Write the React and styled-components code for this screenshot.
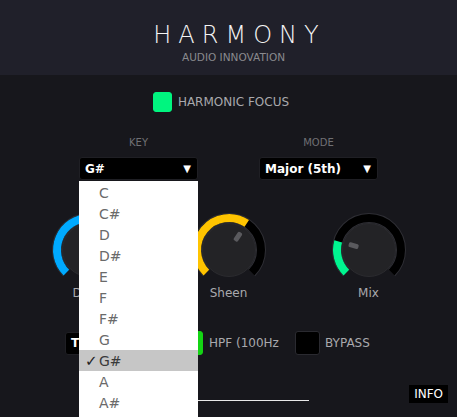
import React from 'react'
import styled, { createGlobalStyle } from 'styled-components'

const Global = createGlobalStyle`
  html, body {
    margin: 0;
    padding: 0;
    background: #17171c;
    height: 100%;
    overflow: hidden;
  }
  * { box-sizing: border-box; }
`

const Page = styled.div`
  width: 457px;
  height: 417px;
  position: relative;
  overflow: hidden;
  background: #17171c;
  font-family: "DejaVu Sans", Verdana, sans-serif;
  display: flex;
  flex-direction: column;
`

const Header = styled.header`
  height: 75px;
  background: #20202a;
  display: flex;
  flex-direction: column;
  align-items: center;
  padding: 22px 0 0 10px;
`

const Title = styled.h1`
  margin: 0;
  padding-left: 12px;
  color: #f4f4f4;
  font-size: 24px;
  font-weight: 200;
  letter-spacing: 7px;
  line-height: 26px;
`

const Subtitle = styled.div`
  margin-top: 3px;
  color: #8a8a8e;
  font-size: 10.5px;
  line-height: 13px;
`

const FocusRow = styled.label`
  display: flex;
  align-items: center;
  justify-content: center;
  gap: 6px;
  margin-top: 17px;
  padding-right: 15px;
  color: #a9a9ad;
  font-size: 12px;
`

const Check = styled.span`
  width: ${p => p.$w || 19}px;
  height: ${p => p.$h || 20}px;
  border-radius: 3px;
  background: ${p => p.$color || '#000'};
  border: 1px solid ${p => p.$border || p.$color || '#2a2a30'};
  flex: none;
`

const SelectRow = styled.div`
  display: grid;
  grid-template-columns: 119px 119px;
  justify-content: center;
  column-gap: 61px;
  margin-top: 26px;
`

const Field = styled.div`
  display: flex;
  flex-direction: column;
  align-items: center;
  gap: 9px;
  position: relative;
`

const FieldLabel = styled.div`
  color: #707074;
  font-size: 10px;
  line-height: 10px;
`

const Select = styled.div`
  width: ${p => p.$width || 119}px;
  height: 23px;
  background: #000;
  border: 1px solid #1f1f24;
  border-radius: 3px;
  display: flex;
  align-items: center;
  justify-content: space-between;
  padding: 0 6px 0 5px;
  color: #fff;
  font-weight: bold;
  font-size: 12px;
  flex: none;
  overflow: hidden;
`

const Arrow = styled.span`
  font-size: 10px;
  font-weight: normal;
`

const Menu = styled.ul`
  position: absolute;
  top: 43px;
  left: 0;
  width: 119px;
  margin: 0;
  padding: 1px 0 0;
  list-style: none;
  background: #fff;
  z-index: 10;
`

const MenuItem = styled.li`
  height: 21px;
  display: flex;
  align-items: center;
  padding-left: 20px;
  position: relative;
  font-size: 14px;
  color: ${p => (p.$active ? '#3a3a3a' : '#6a6a6a')};
  background: ${p => (p.$active ? '#c6c6c6' : 'transparent')};
`

const Tick = styled.span`
  position: absolute;
  left: 6px;
  color: #222;
  font-size: 15px;
  font-weight: bold;
`

const KnobRow = styled.div`
  display: grid;
  grid-template-columns: repeat(3, 140px);
  justify-content: center;
  margin-top: 32px;
`

const KnobBox = styled.div`
  display: flex;
  flex-direction: column;
  align-items: center;
`

const KnobLabel = styled.div`
  margin-top: -2px;
  color: #a9a9ad;
  font-size: 12px;
  line-height: 14px;
`

const ControlRow = styled.div`
  display: flex;
  align-items: center;
  margin-top: 31px;
  padding-left: 65px;
`

const OptLabel = styled.span`
  color: #a9a9ad;
  font-size: 12px;
  width: ${p => (p.$clip ? '70px' : 'auto')};
  white-space: nowrap;
  overflow: hidden;
  margin: 0 ${p => p.$mr || 0}px 0 ${p => p.$ml || 6}px;
`

const Rule = styled.div`
  width: 161px;
  height: 1px;
  background: #e8e8e8;
  margin: 45px auto 0;
`

const InfoButton = styled.button`
  position: absolute;
  right: 9px;
  bottom: 14px;
  background: #000;
  color: #fff;
  border: none;
  font-family: "DejaVu Sans", Verdana, sans-serif;
  font-size: 12px;
  padding: 2px 5px;
  line-height: 14px;
`

const polar = (cx, cy, r, deg) => {
  const a = (deg * Math.PI) / 180
  return [cx + r * Math.sin(a), cy - r * Math.cos(a)]
}

const arc = (cx, cy, r, from, to) => {
  const [x1, y1] = polar(cx, cy, r, from)
  const [x2, y2] = polar(cx, cy, r, to)
  const large = to - from > 180 ? 1 : 0
  return `M ${x1} ${y1} A ${r} ${r} 0 ${large} 1 ${x2} ${y2}`
}

const Knob = ({ label, value, color }) => {
  const c = 38
  const end = -135 + 270 * value
  return (
    <KnobBox>
      <svg width="76" height="76" viewBox="0 0 76 76">
        <path d={arc(c, c, 32, -135, 135)} stroke="#2e2e34" strokeWidth="10" fill="none" />
        <path d={arc(c, c, 32, -135, 135)} stroke="#000" strokeWidth="8" fill="none" />
        <path d={arc(c, c, 32, -135, end)} stroke={color} strokeWidth="8" fill="none" />
        <circle cx={c} cy={c} r="26.5" fill="#232326" stroke="#2b2b2f" strokeWidth="1" />
        <rect x={c - 2.5} y={c - 21} width="5" height="10" rx="1.5" fill="#5a5a5e"
          transform={`rotate(${end} ${c} ${c})`} />
      </svg>
      <KnobLabel>{label}</KnobLabel>
    </KnobBox>
  )
}

const keys = ['C', 'C#', 'D', 'D#', 'E', 'F', 'F#', 'G', 'G#', 'A', 'A#', 'B']

const App = () => (
  <Page>
    <Global />
    <Header>
      <Title>HARMONY</Title>
      <Subtitle>AUDIO INNOVATION</Subtitle>
    </Header>

    <FocusRow>
      <Check $color="#00f57f" />
      HARMONIC FOCUS
    </FocusRow>

    <SelectRow>
      <Field>
        <FieldLabel>KEY</FieldLabel>
        <Select>G#<Arrow>▼</Arrow></Select>
        <Menu>
          {keys.map(k => (
            <MenuItem key={k} $active={k === 'G#'}>
              {k === 'G#' && <Tick>✓</Tick>}
              {k}
            </MenuItem>
          ))}
        </Menu>
      </Field>
      <Field>
        <FieldLabel>MODE</FieldLabel>
        <Select>Major (5th)<Arrow>▼</Arrow></Select>
      </Field>
    </SelectRow>

    <KnobRow>
      <Knob label="Drive" value={0.5} color="#00aaff" />
      <Knob label="Sheen" value={0.625} color="#ffc400" />
      <Knob label="Mix" value={0.225} color="#00f590" />
    </KnobRow>

    <ControlRow>
      <Select $width={110}>TUBE<Arrow>▼</Arrow></Select>
      <Check $w={24} $h={24} $color="#14d414" style={{ marginLeft: 4 }} />
      <OptLabel $clip>HPF (100Hz)</OptLabel>
      <Check $w={25} $h={24} style={{ marginLeft: 16 }} />
      <OptLabel $ml={5}>BYPASS</OptLabel>
    </ControlRow>

    <Rule />
    <InfoButton>INFO</InfoButton>
  </Page>
)

export default App
